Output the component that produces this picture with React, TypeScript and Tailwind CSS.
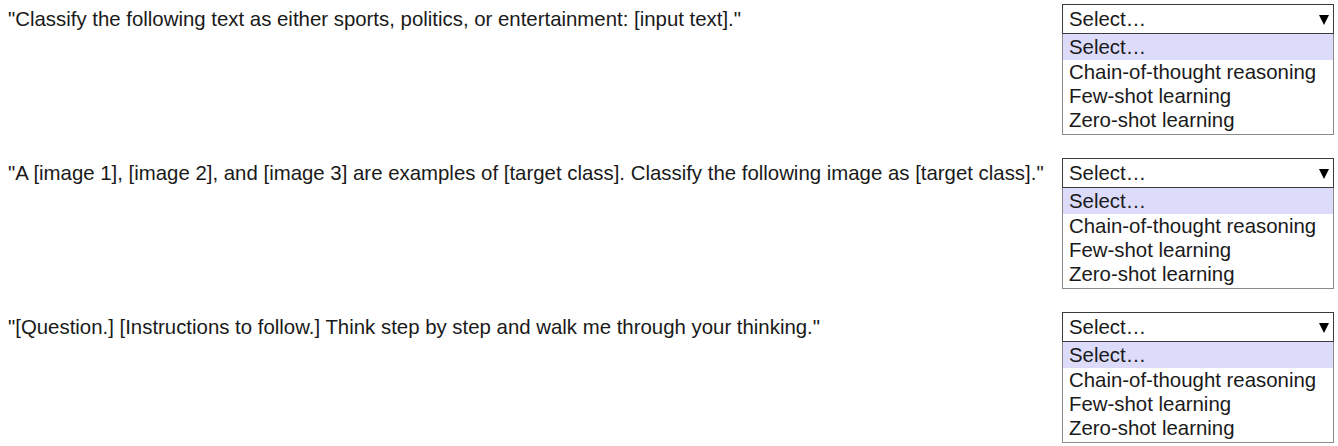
import React from "react";

const prompts = [
  '"Classify the following text as either sports, politics, or entertainment: [input text]."',
  '"A [image 1], [image 2], and [image 3] are examples of [target class]. Classify the following image as [target class]."',
  '"[Question.] [Instructions to follow.] Think step by step and walk me through your thinking."',
];

const options = ["Select…", "Chain-of-thought reasoning", "Few-shot learning", "Zero-shot learning"];

const Dropdown = () => (
  <div className="w-[272px] shrink-0">
    <div className="h-[30px] border border-[#3c3c3c] bg-white flex items-center justify-between pl-[6px] pr-[4px]">
      <span>Select…</span>
      <svg width="10" height="11" viewBox="0 0 10 11">
        <path d="M0 1h10L5 11z" fill="#000" />
      </svg>
    </div>
    <div className="border border-[#8a8a8a] border-t-0 bg-white pb-[2px]">
      {options.map((o, i) => (
        <div
          key={o}
          className={`pl-[6px] whitespace-nowrap ${i === 0 ? "bg-[#dcdcfa] h-[26px] leading-[26px]" : "h-6 leading-[24px]"}`}
        >
          {o}
        </div>
      ))}
    </div>
  </div>
);

const App = () => {
  return (
    <div className="w-[1338px] h-[446px] bg-white text-[#1a1a1a] text-[20.4px] font-['Liberation_Sans',Arial,sans-serif] pt-1 pl-2 pr-1 overflow-hidden">
      <div className="flex flex-col gap-[23px]">
        {prompts.map((p) => (
          <div key={p} className="flex justify-between items-start">
            <p className="pt-[4px] leading-[22px] whitespace-nowrap">{p}</p>
            <Dropdown />
          </div>
        ))}
      </div>
    </div>
  );
};

export default App;
